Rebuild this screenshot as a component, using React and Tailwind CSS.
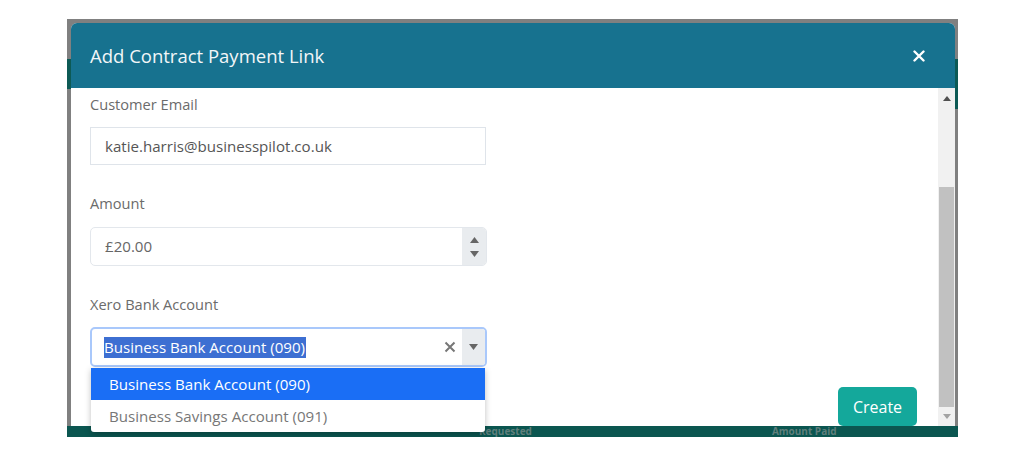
import React from 'react';

const font = { fontFamily: '"Open Sans", "Noto Sans", sans-serif' };

const Triangle = ({ up, color = '#555' }) => (
    <svg width="9" height="6" viewBox="0 0 9 6" className="block">
        {up ? <path d="M0 6 L4.5 0 L9 6 Z" fill={color} /> : <path d="M0 0 L4.5 6 L9 0 Z" fill={color} />}
    </svg>
);

const Label = ({ children }) => (
    <div className="h-[20px] leading-[20px] text-[14.6px] text-[#6b6b6b]">{children}</div>
);

export default function App() {
    return (
        <div className="w-[1024px] h-[461px] bg-white pt-[19px] pl-[67px]" style={font}>
            <div className="relative w-[891px] h-[418px] bg-[#808080] flex flex-col overflow-hidden">
                {/* backdrop bits peeking out at the sides */}
                <div className="absolute left-0 top-[40px] w-[4px] h-[30px] bg-[#0d5a55]" />
                <div className="absolute right-0 top-[40px] w-[4px] h-[50px] bg-[#0d5a55]" />

                <div className="h-[4px] shrink-0" />
                <div className="relative ml-[4px] w-[884px] h-[403px] shrink-0 flex flex-col bg-white rounded-t-[6px]">
                    {/* header */}
                    <div className="h-[65px] shrink-0 bg-[#17728f] rounded-t-[6px] flex items-center justify-between pl-[19px] pr-[30px]">
                        <span className="text-[18.5px] text-[#f2f6f8]">Add Contract Payment Link</span>
                        <svg width="12" height="12" viewBox="0 0 12 12">
                            <path d="M1.5 1.5 L10.5 10.5 M10.5 1.5 L1.5 10.5" stroke="white" strokeWidth="2.4" strokeLinecap="round" />
                        </svg>
                    </div>

                    {/* body */}
                    <div className="flex flex-1 min-h-0">
                        <div className="relative flex-1 pl-[19px] pt-[6px]">
                            <Label>Customer Email</Label>
                            <div className="mt-[13px] w-[396px] h-[38px] border border-[#dfe4ea] flex items-center pl-[14px] text-[15.1px] text-[#555]">
                                katie.harris@businesspilot.co.uk
                            </div>

                            <div className="mt-[28px]">
                                <Label>Amount</Label>
                            </div>
                            <div className="mt-[14px] w-[397px] h-[39px] border border-[#e3e7ec] rounded-[5px] flex overflow-hidden">
                                <div className="flex-1 flex items-center pl-[14px] text-[15.1px] text-[#666]">£20.00</div>
                                <div className="w-[24px] bg-[#e9ecef] flex flex-col items-center justify-center gap-[8px]">
                                    <Triangle up color="#666" />
                                    <Triangle color="#666" />
                                </div>
                            </div>

                            <div className="mt-[28px]">
                                <Label>Xero Bank Account</Label>
                            </div>
                            <div className="mt-[13px] w-[397px] h-[40px] border-2 border-[#a9c8fb] rounded-[5px] flex overflow-hidden">
                                <div className="flex-1 flex items-center pl-[12px]">
                                    <span className="bg-[#3d6fd2] text-white text-[15.1px] leading-[21px] pr-[1px]">Business Bank Account (090)</span>
                                </div>
                                <div className="w-[24px] flex items-center justify-center">
                                    <svg width="12" height="12" viewBox="0 0 12 12">
                                        <path d="M1.5 1.5 L10.5 10.5 M10.5 1.5 L1.5 10.5" stroke="#777" strokeWidth="2" />
                                    </svg>
                                </div>
                                <div className="w-[23px] bg-[#e9ecef] flex items-center justify-center">
                                    <Triangle color="#666" />
                                </div>
                            </div>

                            {/* dropdown menu */}
                            <div className="absolute left-[20px] top-[280px] z-10 w-[394px] bg-white shadow-[0_2px_6px_rgba(0,0,0,0.25)] rounded-b-[3px]">
                                <div className="h-[32px] bg-[#1a6ef5] text-white text-[15.1px] flex items-center pl-[18px]">Business Bank Account (090)</div>
                                <div className="h-[32px] text-[#777] text-[15.1px] flex items-center pl-[18px]">Business Savings Account (091)</div>
                            </div>

                            <button className="absolute right-[21px] bottom-0 w-[79px] h-[39px] bg-[#14a89b] text-white text-[16px] rounded-[5px]">
                                Create
                            </button>
                        </div>

                        {/* scrollbar */}
                        <div className="w-[17px] shrink-0 bg-[#f1f1f1] flex flex-col items-center">
                            <div className="h-[20px] flex items-center justify-center">
                                <svg width="8" height="5" viewBox="0 0 8 5"><path d="M0 5 L4 0 L8 5 Z" fill="#505050" /></svg>
                            </div>
                            <div className="mt-[79px] w-[15px] h-[220px] bg-[#c1c1c1]" />
                            <div className="flex-1 flex items-center justify-center">
                                <svg width="8" height="5" viewBox="0 0 8 5"><path d="M0 0 L4 5 L8 0 Z" fill="#a3a3a3" /></svg>
                            </div>
                        </div>
                    </div>
                </div>

                {/* backdrop table header showing below */}
                <div className="flex-1 bg-[#0b5650] flex items-center text-[10px] font-bold text-[#5f7f7c] leading-[11px]">
                    <span className="ml-[412px]">Requested</span>
                    <span className="ml-[240px]">Amount Paid</span>
                </div>
            </div>
        </div>
    );
}
